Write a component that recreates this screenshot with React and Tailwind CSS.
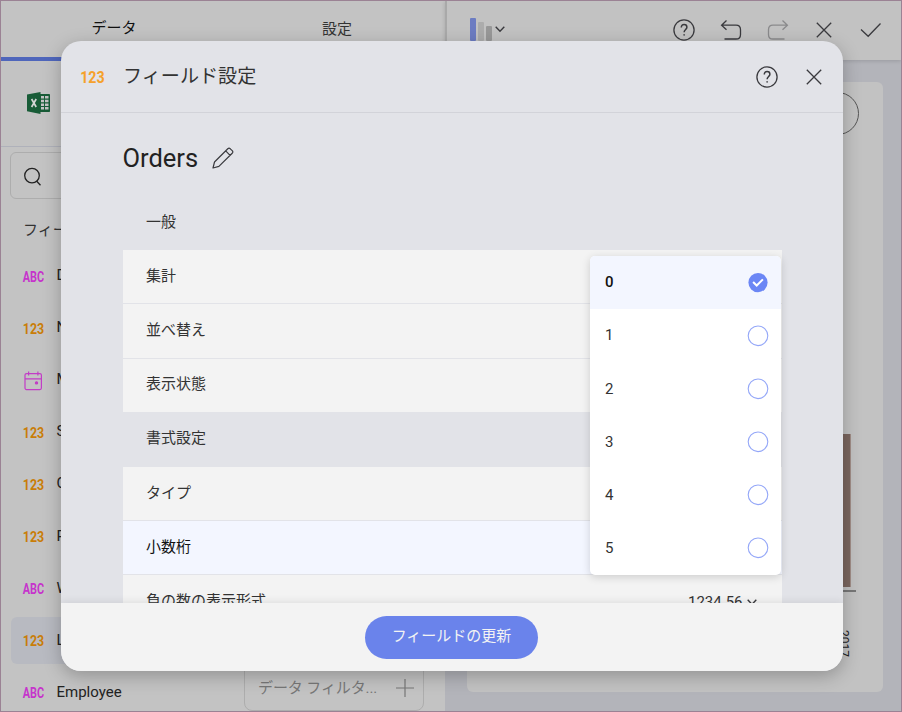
const JP = "font-[Roboto,'Noto_Sans_CJK_JP',sans-serif]";

function Help() {
  return (
    <svg width="24" height="24" viewBox="0 0 24 24" fill="none" stroke="#3a3a3e" strokeWidth="1.3">
      <circle cx="12" cy="12" r="10.1" />
      <path d="M9.3 9.4c0-1.8 1.1-2.9 2.8-2.9s2.8 1.1 2.8 2.7c0 2.2-2.8 2.5-2.8 5.1" strokeWidth="1.5" />
      <circle cx="12.1" cy="16.9" r=".4" strokeWidth="1" fill="#3a3a3e" />
    </svg>
  );
}

function Cross() {
  return (
    <svg width="16" height="16" viewBox="0 0 16 16" fill="none" stroke="#3a3a3e" strokeWidth="1.3">
      <path d="M.8.8l14.4 14.4M15.2.8L.8 15.2" />
    </svg>
  );
}

function Undo({ color }) {
  return (
    <svg width="22" height="22" viewBox="0 0 22 22" fill="none" stroke={color} strokeWidth="1.3">
      <path d="M6.5.5L1.6 5.2l4.9 4.6M1.8 5.2H16q4.5 0 4.5 4.5V14.4q0 4.6-4.5 4.6H4.5" />
    </svg>
  );
}

function Chevron({ className }) {
  return (
    <svg className={className} width="10" height="7" viewBox="0 0 10 7" fill="none" stroke="#3a3a3e" strokeWidth="1.4">
      <path d="M.7.8L5 5.3 9.3.8" />
    </svg>
  );
}

function TypeIcon({ type }) {
  if (type === "date") {
    return (
      <svg width="22" height="20" viewBox="0 0 22 20" fill="none" stroke="#c23dc6" strokeWidth="1.2" className="mt-[2px] shrink-0">
        <rect x="2" y="2.6" width="16.4" height="16" rx="1.5" />
        <path d="M2 7.8h16.4M5.6.6v4M14.9.6v4" />
        <circle cx="13.5" cy="11.9" r="1.1" fill="#c23dc6" />
      </svg>
    );
  }
  const num = type === "123";
  return (
    <svg width="22" height="20" className="shrink-0 overflow-visible">
      <text x="-0.2" y="15.6" textLength="21.3" lengthAdjust="spacingAndGlyphs" fontFamily="Roboto" fontWeight="700" fontSize="14" fill={num ? "#c97d08" : "#c634cc"}>
        {type}
      </text>
    </svg>
  );
}

const fields = [
  ["ABC", "D"],
  ["123", "N"],
  ["date", "M"],
  ["123", "S"],
  ["123", "C"],
  ["123", "P"],
  ["ABC", "W"],
  ["123", "L"],
  ["ABC", "Employee"],
];

function Sidebar() {
  return (
    <div className="flex w-[444px] shrink-0 flex-col bg-[#c3c3c3]">
      <div className="flex h-[59.5px] shrink-0">
        <div className="flex w-[226px] flex-col items-center justify-between border-b-4 border-[#4f66bb] pt-[16px] text-[15px] leading-[23px] text-[#111]">データ</div>
        <div className="flex flex-1 justify-center pt-[16px] pl-[2px] text-[15px] leading-[24px] text-[#333]">設定</div>
      </div>
      <div className="flex h-[86.5px] shrink-0 items-start border-b border-[#afb1ba] pt-[31.5px] pl-[26px]">
        <svg width="24" height="22" viewBox="0 0 24 22">
          <rect x="12" y="2" width="11" height="18" rx=".8" fill="#185c37" />
          <path d="M14 4h3v2.5h-3zM18 4h3.5v2.5H18zM14 7.7h3v2.5h-3zM18 7.7h3.5v2.5H18zM14 11.4h3v2.5h-3zM18 11.4h3.5v2.5H18zM14 15.1h3v2.5h-3zM18 15.1h3.5v2.5H18z" fill="#c3c3c3" />
          <path d="M0 2.6L13.5 0v22L0 19.2z" fill="#185c37" />
          <path d="M4.6 7l4.6 8M9.2 7l-4.6 8" stroke="#d5d5d5" strokeWidth="1.7" />
        </svg>
      </div>
      <div className="mt-[5px] ml-[9px] flex h-[47px] w-[224px] shrink-0 items-center rounded-md border border-[#adadad] pt-[2px] pl-[12px]">
        <svg width="19" height="19" viewBox="0 0 19 19" fill="none" stroke="#222" strokeWidth="1.3">
          <circle cx="9" cy="8.6" r="7.3" />
          <path d="M13.5 14l4 4.2" />
        </svg>
      </div>
      <div className="mt-[19px] ml-[22px] h-[25px] shrink-0 text-[15px] leading-[24px] text-[#333]">フィールド</div>
      <div className="flex min-h-0 flex-1 overflow-hidden">
        <div className="flex w-[243px] shrink-0 flex-col pt-[7px] pl-[9.5px]">
          {fields.map(([type, label], i) => (
            <div key={label} className="flex h-[52.05px] shrink-0 items-center">
              <div className={(i === 7 ? "bg-[#b8bac1] " : "") + "flex h-[47px] w-[224px] items-center rounded-md pl-[12.5px] text-[15px] text-[#222]"}>
                <TypeIcon type={type} />
                <span className="mb-[1px] ml-[11.5px]">{label}</span>
              </div>
            </div>
          ))}
        </div>
        <div className="flex w-[180px] shrink-0 flex-col justify-end">
          <div className="flex h-[64px] items-center justify-between rounded-b-lg border border-[#adadad] pt-[18px] pr-[9px] pl-[13px] text-[15px] text-[#777]">
            <span className="tracking-[-0.1px]">データ フィルタ...</span>
            <svg width="18" height="18" viewBox="0 0 18 18" stroke="#777" strokeWidth="1.2">
              <path d="M9 0v18M0 9h18" />
            </svg>
          </div>
        </div>
      </div>
    </div>
  );
}

function Preview() {
  return (
    <div className="flex flex-1 flex-col bg-[#b3b4ba]">
      <div className="flex h-[59px] shrink-0 items-start border-l-2 border-[#a9a9a9] bg-[#c2c2c2] pr-[19px] shadow-[0_1px_4px_rgba(0,0,0,0.15)]">
        <div className="mt-[17px] ml-[23px] flex items-end gap-[2px]">
          <div className="h-[23px] w-[6px] rounded-[1px] bg-[#6c7cc2]" />
          <div className="h-[19px] w-[6px] rounded-[1px] bg-[#acacac]" />
          <div className="h-[15px] w-[6px] rounded-[1px] bg-[#989898]" />
        </div>
        <Chevron className="mt-[25px] ml-[3px]" />
        <div className="mt-[16px] ml-auto flex h-[25px] items-center">
          <Help />
          <span className="mt-[2px] ml-[24px]"><Undo color="#3a3a3e" /></span>
          <span className="mt-[2px] ml-[25px] -scale-x-100"><Undo color="#8a8a8c" /></span>
          <span className="ml-[27.5px]"><Cross /></span>
          <svg className="ml-[28px]" width="22" height="16" viewBox="0 0 22 16" fill="none" stroke="#3a3a3e" strokeWidth="1.3">
            <path d="M1 7.5l7.2 6.8L20.5 1.5" />
          </svg>
        </div>
      </div>
      <div className="mt-[22px] ml-[22px] flex h-[610px] w-[416px] flex-col items-end overflow-hidden rounded-md bg-[#c2c2c2]">
        <div className="mt-[10px] mr-[24px] h-[43px] w-[43px] shrink-0 rounded-full border border-[#555]" />
        <div className="mt-[299px] mr-[32px] h-[153px] w-[30px] shrink-0 border-r border-[#a08d87] bg-[#7b665f]" />
        <div className="mt-[3px] mr-[27px] h-[2px] w-[40px] shrink-0 bg-[#777]" />
        <div className="mt-[38px] mr-[32px] text-[12px] leading-[14px] text-[#222] [writing-mode:vertical-rl]">2017</div>
      </div>
    </div>
  );
}

const rows = [
  ["一般", "head"],
  ["集計", ""],
  ["並べ替え", ""],
  ["表示状態", ""],
  ["書式設定", "head"],
  ["タイプ", ""],
  ["小数桁", "active"],
  ["負の数の表示形式", ""],
];

const rowStyle = {
  head: "border-[#e2e3e8] text-[#333]",
  "": "border-[#e2e3e8] bg-[#f3f3f3] text-[#333]",
  active: "border-[#e2e3e8] bg-[#f3f6ff] text-[#111]",
};

function Menu() {
  return (
    <div className="absolute top-[143px] left-[528.5px] flex w-[191px] flex-col overflow-hidden rounded-[5px] bg-white shadow-[0_2px_8px_rgba(0,0,0,0.16)]">
      {[0, 1, 2, 3, 4, 5].map((n) => (
        <div key={n} className={(n === 0 ? "bg-[#f3f6ff] font-medium text-[#111] " : "text-[#333] ") + "flex h-[53.15px] items-center justify-between pr-[12px] pl-[15px] text-[15px]"}>
          <span>{n}</span>
          <svg width="22" height="22" viewBox="0 0 22 22" fill="none">
            {n === 0 ? (
              <>
                <circle cx="11" cy="10.6" r="9.6" fill="#6b86f5" />
                <path d="M6.1 10l3.6 3.5 6.2-6.1" stroke="#fff" strokeWidth="2" />
              </>
            ) : (
              <circle cx="11" cy="10.8" r="9.8" stroke="#94a7f8" strokeWidth="1.1" />
            )}
          </svg>
        </div>
      ))}
    </div>
  );
}

function Modal() {
  return (
    <div className="absolute top-[41px] left-[61px] flex h-[630px] w-[782px] flex-col overflow-hidden rounded-[20px] bg-[#e2e3e8] shadow-[0_5px_18px_rgba(0,0,0,0.25)]">
      <div className="flex h-[72px] shrink-0 items-center border-b border-[#d2d3d9] pr-[21px] pl-[18.5px]">
        <svg width="26" height="24" className="overflow-visible">
          <text x="0.2" y="18" textLength="24.5" lengthAdjust="spacingAndGlyphs" fontFamily="Roboto" fontWeight="700" fontSize="17" fill="#f5a12b">123</text>
        </svg>
        <div className="ml-[17.5px] text-[19.1px] leading-[28px] text-[#333]">フィールド設定</div>
        <div className="ml-auto flex items-center gap-[27px]">
          <Help />
          <Cross />
        </div>
      </div>
      <div className="flex min-h-0 flex-1 flex-col overflow-hidden px-[61.5px]">
        <div className="mt-[29px] flex h-[32px] shrink-0 items-center text-[25.5px] text-[#222]">
          Orders
          <svg className="ml-[13.5px]" width="22" height="22" viewBox="0 0 22 22" fill="none" stroke="#3a3a3e" strokeWidth="1.2" strokeLinejoin="round">
            <path d="M1 21l1.5-6L15.8 1.8q1.2-1.2 2.5 0l1.9 1.9q1.3 1.3 0 2.5L6.9 19.4zM13.7 3.9l4.4 4.4" />
          </svg>
        </div>
        <div className="mt-[22px] flex flex-col">
          {rows.map(([label, kind]) => (
            <div key={label} className={rowStyle[kind] + " flex h-[54.2px] shrink-0 items-center border-b pr-[25px] pb-[1.5px] pl-[23.5px] text-[15px]"}>
              {label}
              {label === "負の数の表示形式" && (
                <span className="ml-auto flex items-center gap-[4px] pt-[3px]">1234.56 <Chevron /></span>
              )}
            </div>
          ))}
        </div>
      </div>
      <div className="z-10 flex h-[68px] shrink-0 items-center justify-center bg-[#f3f3f3] pr-[1px] shadow-[0_-2px_7px_rgba(0,0,0,0.08)]">
        <button className="h-[43px] w-[173px] rounded-full bg-[#6a83eb] pb-[1px] text-[15px] text-[#f3f3f3]">フィールドの更新</button>
      </div>
    </div>
  );
}

export default function App() {
  return (
    <div className={JP + " relative h-[712px] w-[902px] overflow-hidden border border-[#9b8294]"}>
      <div className="flex h-full">
        <Sidebar />
        <Preview />
      </div>
      <div className="absolute -top-px -left-px">
        <Modal />
        <div className="absolute top-[113px] left-[61.5px]">
          <Menu />
        </div>
      </div>
    </div>
  );
}
